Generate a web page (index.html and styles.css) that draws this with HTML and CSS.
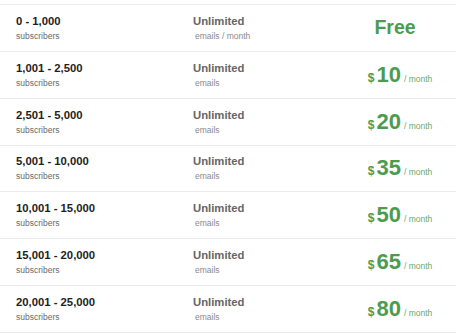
FILE: index.html
```html
<!DOCTYPE html>
<html>
<head>
<meta charset="utf-8">
<link rel="stylesheet" href="styles.css">
</head>
<body>
<div class="table">
  <div class="row">
    <div class="col range"><div class="title">0 - 1,000</div><div class="sub">subscribers</div></div>
    <div class="col emails"><div class="title">Unlimited</div><div class="sub">emails / month</div></div>
    <div class="col price"><span class="free">Free</span></div>
  </div>
  <div class="row">
    <div class="col range"><div class="title">1,001 - 2,500</div><div class="sub">subscribers</div></div>
    <div class="col emails"><div class="title">Unlimited</div><div class="sub">emails</div></div>
    <div class="col price"><span class="cur">$</span><span class="amt">10</span><span class="per">/ month</span></div>
  </div>
  <div class="row">
    <div class="col range"><div class="title">2,501 - 5,000</div><div class="sub">subscribers</div></div>
    <div class="col emails"><div class="title">Unlimited</div><div class="sub">emails</div></div>
    <div class="col price"><span class="cur">$</span><span class="amt">20</span><span class="per">/ month</span></div>
  </div>
  <div class="row">
    <div class="col range"><div class="title">5,001 - 10,000</div><div class="sub">subscribers</div></div>
    <div class="col emails"><div class="title">Unlimited</div><div class="sub">emails</div></div>
    <div class="col price"><span class="cur">$</span><span class="amt">35</span><span class="per">/ month</span></div>
  </div>
  <div class="row">
    <div class="col range"><div class="title">10,001 - 15,000</div><div class="sub">subscribers</div></div>
    <div class="col emails"><div class="title">Unlimited</div><div class="sub">emails</div></div>
    <div class="col price"><span class="cur">$</span><span class="amt">50</span><span class="per">/ month</span></div>
  </div>
  <div class="row">
    <div class="col range"><div class="title">15,001 - 20,000</div><div class="sub">subscribers</div></div>
    <div class="col emails"><div class="title">Unlimited</div><div class="sub">emails</div></div>
    <div class="col price"><span class="cur">$</span><span class="amt">65</span><span class="per">/ month</span></div>
  </div>
  <div class="row">
    <div class="col range"><div class="title">20,001 - 25,000</div><div class="sub">subscribers</div></div>
    <div class="col emails"><div class="title">Unlimited</div><div class="sub">emails</div></div>
    <div class="col price"><span class="cur">$</span><span class="amt">80</span><span class="per">/ month</span></div>
  </div>
</div>
</body>
</html>
```

FILE: styles.css
```css
html, body {
  margin: 0;
  padding: 0;
  background: #fff;
}
body {
  font-family: "Liberation Sans", Arial, sans-serif;
  overflow: hidden;
}
.table {
  margin-top: 4px;
  border-top: 1px solid #ebebeb;
}
.row {
  display: grid;
  grid-template-columns: 177px 151px 1fr;
  height: 45.85px;
  border-bottom: 1px solid #ebebeb;
  padding-left: 16px;
  align-items: center;
}
.col {
  display: flex;
  flex-direction: column;
}
.title {
  font-size: 11.3px;
  font-weight: bold;
  color: #1e1e1e;
  line-height: 14px;
}
.sub {
  font-size: 8.5px;
  color: #6a6a6a;
  line-height: 12px;
  margin-top: 2px;
}
.emails .title {
  color: #666;
}
.emails .sub {
  color: #8a8a8a;
  padding-left: 2px;
}
.price {
  flex-direction: row;
  justify-content: center;
  align-items: baseline;
  color: #4c9c50;
  font-weight: bold;
}
.free {
  font-size: 19.5px;
  margin-right: 10px;
}
.cur {
  font-size: 12px;
  margin-right: 2px;
}
.amt {
  font-size: 22px;
}
.per {
  font-size: 8.5px;
  font-weight: normal;
  color: #6aa86d;
  margin-left: 3px;
}
```
